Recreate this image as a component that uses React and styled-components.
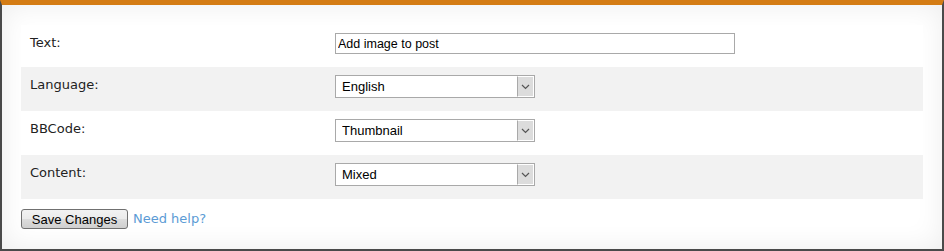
import React from "react";
import styled, { createGlobalStyle } from "styled-components";

const Global = createGlobalStyle`
  html, body { margin: 0; padding: 0; background: #ffffff; }
  body { font-family: "DejaVu Sans", Verdana, sans-serif; font-size: 13px; color: #222; }
`;

const Panel = styled.div`
  box-sizing: border-box;
  width: 944px;
  height: 251px;
  background: #ffffff;
  border-top: 5px solid #d47c14;
  border-left: 2px solid #4a4a4a;
  border-right: 2px solid #4a4a4a;
  border-bottom: 2px solid #4a4a4a;
  box-shadow: inset 0 0 28px rgba(0, 0, 0, 0.075);
  padding: 20px 19px 20px 19px;
  display: flex;
  flex-direction: column;
  gap: 10px;
`;

const Table = styled.div`
  display: flex;
  flex-direction: column;
`;

const Row = styled.div`
  display: grid;
  grid-template-columns: 314px 1fr;
  height: ${(p) => p.$h}px;
  box-sizing: border-box;
  padding-top: 8px;
  background: ${(p) => (p.$alt ? "#f2f2f2" : "#ffffff")};
`;

const Label = styled.div`
  padding-left: 9px;
  padding-top: 2px;
  line-height: 15px;
  font-family: "DejaVu Sans", Verdana, sans-serif;
  font-size: 13px;
  color: #222;
`;

const Field = styled.div`
  display: flex;
  align-items: flex-start;
`;

const TextInput = styled.input`
  box-sizing: border-box;
  width: 400px;
  height: 21px;
  border: 1px solid #a9a9a9;
  padding: 0 2px;
  font-family: "Liberation Sans", Arial, sans-serif;
  font-size: 12.5px;
  color: #000;
  outline: none;
  background: #fff;
`;

const SelectBox = styled.div`
  box-sizing: border-box;
  width: 200px;
  height: 23px;
  border: 1px solid #a9a9a9;
  background: #fff;
  display: flex;
  align-items: stretch;
`;

const NativeSelect = styled.select`
  flex: 1;
  min-width: 0;
  appearance: none;
  -webkit-appearance: none;
  border: none;
  outline: none;
  background: transparent;
  padding: 0 0 0 6px;
  font-family: "Liberation Sans", Arial, sans-serif;
  font-size: 13px;
  color: #000;
`;

const Arrow = styled.div`
  box-sizing: border-box;
  width: 17px;
  background: #dcdcdc;
  border: 1px solid #ffffff;
  border-left: 1px solid #a9a9a9;
  display: flex;
  align-items: center;
  justify-content: center;
`;

const Actions = styled.div`
  display: flex;
  align-items: center;
  gap: 5px;
  height: 20px;
`;

const Button = styled.button`
  box-sizing: border-box;
  height: 20px;
  width: 107px;
  padding: 0;
  border: 1px solid #707070;
  border-radius: 3px;
  background: linear-gradient(#f2f2f2 0%, #ebebeb 50%, #dddddd 51%, #cfcfcf 100%);
  font-family: "Liberation Sans", Arial, sans-serif;
  font-size: 13px;
  color: #000;
`;

const HelpLink = styled.a`
  font-family: "DejaVu Sans", Verdana, sans-serif;
  font-size: 13px;
  color: #5b9bd5;
  text-decoration: none;
  line-height: 15px;
  margin-top: -2px;
`;

function Chevron() {
  return (
    <svg width="9" height="6" viewBox="0 0 9 6">
      <path d="M1 1 L4.5 4.5 L8 1" fill="none" stroke="#555" strokeWidth="1.2" />
    </svg>
  );
}

function Select({ value, options }) {
  return (
    <SelectBox>
      <NativeSelect defaultValue={value}>
        {options.map((o) => (
          <option key={o}>{o}</option>
        ))}
      </NativeSelect>
      <Arrow>
        <Chevron />
      </Arrow>
    </SelectBox>
  );
}

export default function App() {
  return (
    <>
      <Global />
      <Panel>
        <Table>
          <Row $h={42}>
            <Label>Text:</Label>
            <Field>
              <TextInput defaultValue="Add image to post" />
            </Field>
          </Row>
          <Row $h={44} $alt>
            <Label>Language:</Label>
            <Field>
              <Select value="English" options={["English", "Deutsch", "Français"]} />
            </Field>
          </Row>
          <Row $h={44}>
            <Label>BBCode:</Label>
            <Field>
              <Select value="Thumbnail" options={["Thumbnail", "Full image", "Link"]} />
            </Field>
          </Row>
          <Row $h={44} $alt>
            <Label>Content:</Label>
            <Field>
              <Select value="Mixed" options={["Mixed", "Safe", "Adult"]} />
            </Field>
          </Row>
        </Table>
        <Actions>
          <Button>Save Changes</Button>
          <HelpLink href="#">Need help?</HelpLink>
        </Actions>
      </Panel>
    </>
  );
}
